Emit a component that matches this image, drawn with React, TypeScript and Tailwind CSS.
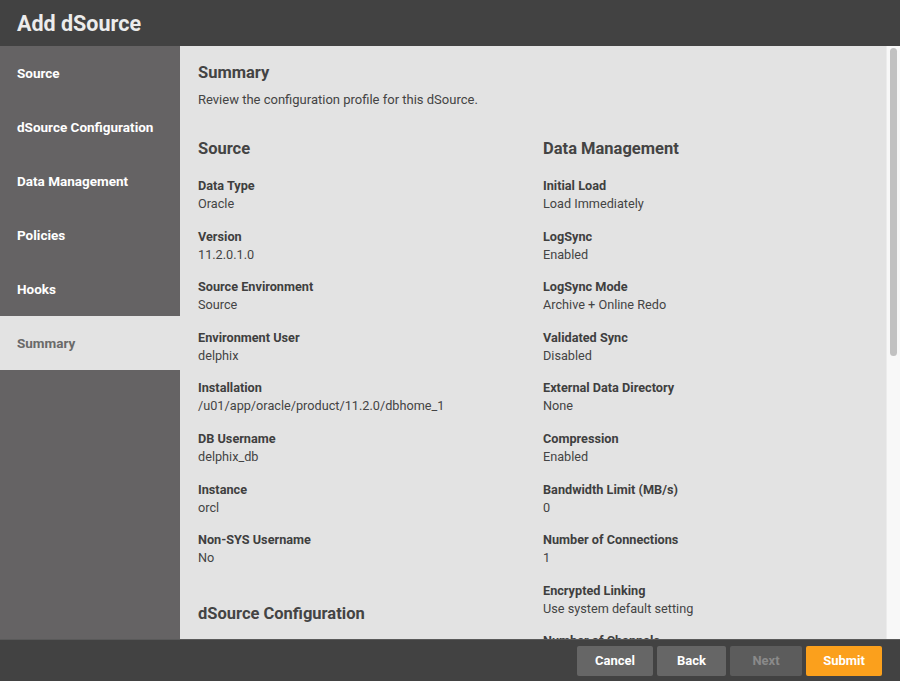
import React from "react";

const navItems = ["Source", "dSource Configuration", "Data Management", "Policies", "Hooks", "Summary"];

const left: [string, string][] = [
  ["Data Type", "Oracle"],
  ["Version", "11.2.0.1.0"],
  ["Source Environment", "Source"],
  ["Environment User", "delphix"],
  ["Installation", "/u01/app/oracle/product/11.2.0/dbhome_1"],
  ["DB Username", "delphix_db"],
  ["Instance", "orcl"],
  ["Non-SYS Username", "No"],
];

const right: [string, string][] = [
  ["Initial Load", "Load Immediately"],
  ["LogSync", "Enabled"],
  ["LogSync Mode", "Archive + Online Redo"],
  ["Validated Sync", "Disabled"],
  ["External Data Directory", "None"],
  ["Compression", "Enabled"],
  ["Bandwidth Limit (MB/s)", "0"],
  ["Number of Connections", "1"],
  ["Encrypted Linking", "Use system default setting"],
  ["Number of Channels", "1"],
];

function Field({ label, value }: { label: string; value: string }) {
  return (
    <div className="mb-[14.6px]">
      <div className="text-[12.7px] leading-[18px] font-bold text-[#3f3f3f]">{label}</div>
      <div className="text-[12.7px] leading-[18px] text-[#444]">{value}</div>
    </div>
  );
}

export default function App() {
  return (
    <div
      className="w-[900px] h-[681px] flex flex-col overflow-hidden bg-[#424242]"
      style={{ fontFamily: "Roboto, 'Liberation Sans', sans-serif" }}
    >
      <div className="h-[46px] shrink-0 flex items-center px-[17px] pt-[2px] bg-[#424242]">
        <h1 className="text-[21.5px] leading-[28px] font-bold text-[#ececec]">Add dSource</h1>
      </div>
      <div className="flex flex-1 min-h-0">
        <div className="w-[180px] shrink-0 bg-[#656364] flex flex-col">
          {navItems.map((n) => (
            <div
              key={n}
              className={
                "h-[54px] flex items-center px-[17px] text-[13.5px] font-bold " +
                (n === "Summary" ? "bg-[#e3e3e3] text-[#6a6a6a]" : "text-white")
              }
            >
              {n}
            </div>
          ))}
        </div>
        <div className="flex-1 bg-[#e3e3e3] overflow-hidden pl-[18px] pt-[16px]">
          <h2 className="text-[16.5px] leading-[22px] font-bold text-[#444]">Summary</h2>
          <p className="mt-[8px] text-[13px] leading-[16px] text-[#444]">
            Review the configuration profile for this dSource.
          </p>
          <div className="grid grid-cols-[345px_1fr] mt-[30px]">
            <div>
              <h3 className="text-[16.5px] leading-[22px] font-bold text-[#444] mb-[17px]">Source</h3>
              {left.map(([l, v]) => (
                <Field key={l} label={l} value={v} />
              ))}
              <h3 className="mt-[36px] text-[16.5px] leading-[22px] font-bold text-[#444]">
                dSource Configuration
              </h3>
            </div>
            <div>
              <h3 className="text-[16.5px] leading-[22px] font-bold text-[#444] mb-[17px]">Data Management</h3>
              {right.map(([l, v]) => (
                <Field key={l} label={l} value={v} />
              ))}
            </div>
          </div>
        </div>
        <div className="w-[14px] shrink-0 bg-[#f8f8f8] border-l border-[#ececec] pt-[2px] flex justify-center">
          <div className="w-[7px] h-[308px] rounded-full bg-[#c1c1c1]" />
        </div>
      </div>
      <div className="h-[42px] shrink-0 border-t border-[#5a5a5a] bg-[#424242] flex items-center justify-end gap-[4px] pr-[18px]">
        <button className="w-[76px] h-[30px] rounded-[2px] bg-[#666] text-white text-[13px] font-bold">Cancel</button>
        <button className="w-[69px] h-[30px] rounded-[2px] bg-[#666] text-white text-[13px] font-bold">Back</button>
        <button className="w-[72px] h-[30px] rounded-[2px] bg-[#5c5c5c] text-[#8a8a8a] text-[13px] font-bold">Next</button>
        <button className="w-[76px] h-[30px] rounded-[2px] bg-[#fba01c] text-white text-[13px] font-bold">Submit</button>
      </div>
    </div>
  );
}
